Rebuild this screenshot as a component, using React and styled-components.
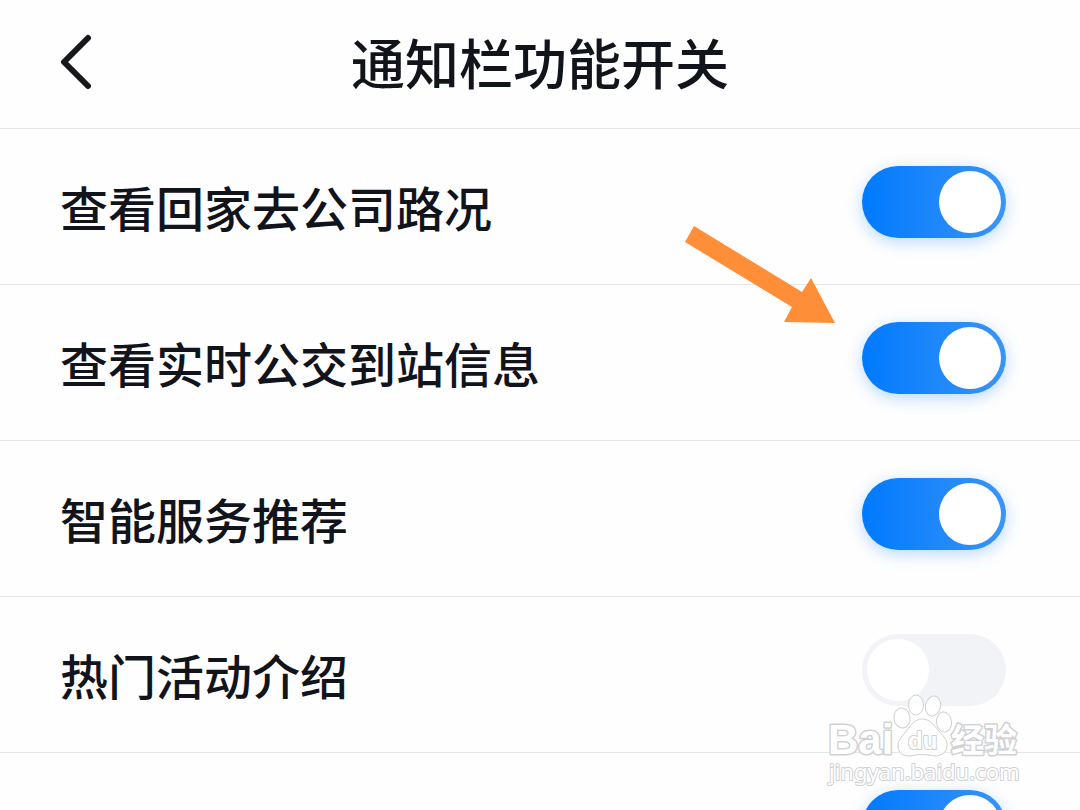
import React, { useState } from 'react';
import styled, { createGlobalStyle } from 'styled-components';

const GlobalStyle = createGlobalStyle`
  * { box-sizing: border-box; }
  body {
    margin: 0;
    background: #fefefe;
    color: #12141c;
    font-family: "Noto Sans CJK SC", sans-serif;
    font-weight: 500;
  }
`;

const Page = styled.main`
  position: relative;
  height: 100vh;
  overflow: hidden;
`;

const Header = styled.header`
  display: grid;
  grid-template-columns: 96px 1fr 96px;
  align-items: center;
  height: 128px;
  padding-bottom: 4px;
`;

const BackButton = styled.button`
  display: flex;
  justify-content: flex-end;
  padding: 0;
  border: 0;
  background: none;
  color: #17181c;
  cursor: pointer;
`;

const Title = styled.h1`
  margin: 0;
  font-size: 54px;
  line-height: 80px;
  font-weight: 500;
  text-align: center;
`;

const List = styled.ul`
  margin: 0;
  padding: 0;
  list-style: none;
`;

const Row = styled.li`
  position: relative;
  border-top: 1px solid #e4e8e9;
`;

const RowLabel = styled.label`
  display: flex;
  align-items: center;
  justify-content: space-between;
  height: 155px;
  padding: 0 74px 10px 60px;
  cursor: pointer;
`;

const RowText = styled.span`
  padding-top: 8px;
  font-size: 48px;
  line-height: 72px;
  white-space: nowrap;
`;

const Switch = styled.input`
  appearance: none;
  flex: none;
  display: flex;
  align-items: center;
  width: 144px;
  height: 72px;
  margin: 0;
  padding: 0 5px;
  border-radius: 36px;
  background: #f2f3f7;
  cursor: pointer;

  &::before {
    content: "";
    width: 62px;
    height: 62px;
    border-radius: 50%;
    background: #fff;
  }

  &:checked {
    justify-content: flex-end;
    background: linear-gradient(90deg, #007aff, #3a94f7);
    box-shadow: 0 4px 16px rgba(0, 122, 255, 0.28);
  }
`;

const Arrow = styled.svg`
  position: absolute;
  right: 244px;
  top: -60px;
  z-index: 1;
  pointer-events: none;
`;

const Watermark = styled.div`
  position: absolute;
  right: 56px;
  bottom: 22px;
  pointer-events: none;

  svg { display: block; }
`;

const MarkText = styled.text`
  fill: #fff;
  stroke: #d0d1d3;
  stroke-width: ${(p) => p.$outline}px;
  stroke-linejoin: round;
  paint-order: stroke;
  font-family: ${(p) => p.$family || '"Noto Sans CJK SC"'}, sans-serif;
  font-weight: ${(p) => p.$weight || 700};
  font-size: ${(p) => p.$size}px;
`;

const rows = [
  { label: '查看回家去公司路况', on: true },
  { label: '查看实时公交到站信息', on: true, pointed: true },
  { label: '智能服务推荐', on: true },
  { label: '热门活动介绍', on: false },
  { label: '查看天气到达时刻', on: true },
];

function SettingRow({ label, on, pointed }) {
  const [checked, setChecked] = useState(on);
  return (
    <Row>
      <RowLabel>
        <RowText>{label}</RowText>
        <Switch
          type="checkbox"
          role="switch"
          checked={checked}
          onChange={(e) => setChecked(e.target.checked)}
        />
      </RowLabel>
      {pointed && (
        <Arrow width="152" height="98" viewBox="0 0 152 98" aria-hidden="true">
          <path d="M10 1 118 67 127 53 151 98 100 97 108 82 1 17Z" fill="#ff8e38" />
        </Arrow>
      )}
    </Row>
  );
}

function BaiduMark() {
  return (
    <Watermark aria-hidden="true">
      <svg width="200" height="96" viewBox="0 0 200 96">
        <g fill="#fff" fillOpacity="0.8" stroke="#d0d1d3" strokeWidth="1">
          <ellipse cx="78" cy="26" rx="8" ry="10" transform="rotate(-8 78 26)" />
          <ellipse cx="92" cy="13" rx="7.5" ry="10" />
          <ellipse cx="109" cy="14" rx="7.5" ry="10" transform="rotate(14 109 14)" />
          <ellipse cx="120" cy="30" rx="7.5" ry="10" transform="rotate(-8 120 30)" />
          <path d="M98 27c8 0 12 6 16 11 5 6 9 9 9 15 0 8-6 11-13 11-8-2-16-2-24 0-7 0-12-3-12-10 0-7 5-10 9-16 4-5 8-11 15-11Z" />
        </g>
        <MarkText x="4" y="62" $size={42} $outline={3} $family="Liberation Sans">Bai</MarkText>
        <MarkText x="84" y="57" $size={24} $outline={2} $family="Liberation Sans">du</MarkText>
        <MarkText x="127" y="60" $size={33} $outline={3}>经验</MarkText>
        <MarkText x="5" y="88" $size={22} $outline={2} $weight={400} $family="Noto Sans">jingyan.baidu.com</MarkText>
      </svg>
    </Watermark>
  );
}

export default function App() {
  return (
    <>
      <GlobalStyle />
      <Page>
        <Header>
          <BackButton type="button" aria-label="返回">
            <svg width="36" height="56" viewBox="0 0 36 56" fill="none" stroke="currentColor" strokeWidth="6" strokeLinecap="round" strokeLinejoin="round">
              <path d="M28 4 4 28 28 52" />
            </svg>
          </BackButton>
          <Title>通知栏功能开关</Title>
        </Header>
        <List>
          {rows.map((row) => (
            <SettingRow key={row.label} {...row} />
          ))}
        </List>
        <BaiduMark />
      </Page>
    </>
  );
}
